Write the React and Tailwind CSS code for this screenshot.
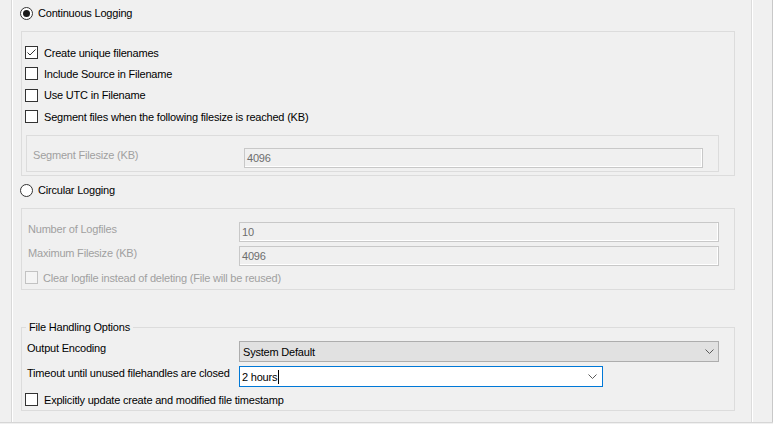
import React from "react";

const font = { fontFamily: '"Liberation Sans", Arial, sans-serif' };

function Radio({ checked }) {
  return (
    <span className="w-[13px] h-[13px] rounded-full border border-[#333333] bg-white flex items-center justify-center shrink-0">
      {checked && <span className="w-[7px] h-[7px] rounded-full bg-[#1a1a1a]" />}
    </span>
  );
}

function Check({ checked, disabled }) {
  return (
    <span
      className={
        "w-[13px] h-[13px] border shrink-0 flex items-center justify-center " +
        (disabled ? "border-[#c2c2c2] bg-[#f4f4f4]" : "border-[#333333] bg-white")
      }
    >
      {checked && (
        <svg width="11" height="11" viewBox="0 0 11 11">
          <polyline points="1.5,5.5 4,8 9.5,2.5" fill="none" stroke="#333333" strokeWidth="1" />
        </svg>
      )}
    </span>
  );
}

function Chevron() {
  return (
    <svg width="9" height="5" viewBox="0 0 9 5" className="shrink-0">
      <polyline points="0.5,0.5 4.5,4.5 8.5,0.5" fill="none" stroke="#5a5a5a" strokeWidth="1" />
    </svg>
  );
}

function CheckRow({ label, checked, h = "h-[21px]" }) {
  return (
    <div className={"flex items-center pl-[3px] " + h}>
      <Check checked={checked} />
      <span className="ml-[6px] leading-[14px] text-black">{label}</span>
    </div>
  );
}

function DisabledInput({ value, w }) {
  return (
    <div
      className={
        "h-[20px] border border-[#c8c8c8] bg-[#f0f0f0] shadow-[inset_-1px_-1px_0_#ffffff] flex items-center pl-[2px] text-[#6d6d6d] leading-[14px] " +
        w
      }
    >
      {value}
    </div>
  );
}

export default function App() {
  return (
    <div
      className="w-[773px] h-[424px] bg-[#f0f0f0] flex flex-col overflow-hidden text-[11px] tracking-[-0.2px] select-none"
      style={font}
    >
      <div className="flex flex-1 min-h-0">
        <div className="w-[11px]" />
        <div className="w-px bg-[#d9d9d9]" />
        <div className="w-px bg-white" />
        {/* content */}
        <div className="flex-1 flex flex-col">
          {/* Continuous logging */}
          <div className="mt-[4px] h-[18px] ml-[7px] flex items-center">
            <Radio checked />
            <span className="ml-[5px] leading-[14px] text-black">Continuous Logging</span>
          </div>
          <div className="mt-[9px] ml-[8px] w-[714px] h-[145px] border border-[#dcdcdc] pt-[10px] flex flex-col">
            <CheckRow label="Create unique filenames" checked />
            <CheckRow label="Include Source in Filename" />
            <CheckRow label="Use UTC in Filename" h="h-[22px]" />
            <CheckRow label="Segment files when the following filesize is reached (KB)" />
            <div className="mt-[8px] ml-[4px] w-[693px] h-[37px] border border-[#dcdcdc] pt-[12px] flex items-start">
              <div className="w-[217px] pl-[6px] leading-[14px] text-[#a0a0a0]">Segment Filesize (KB)</div>
              <DisabledInput value="4096" w="w-[459px]" />
            </div>
          </div>

          {/* Circular logging */}
          <div className="mt-[5px] h-[18px] ml-[7px] flex items-center">
            <Radio />
            <span className="ml-[5px] leading-[14px] text-black">Circular Logging</span>
          </div>
          <div className="mt-[9px] ml-[8px] w-[714px] h-[82px] border border-[#dcdcdc] pt-[13px] flex flex-col">
            <div className="flex items-start">
              <div className="w-[217px] pl-[6px] leading-[14px] text-[#a0a0a0]">Number of Logfiles</div>
              <DisabledInput value="10" w="w-[480px]" />
            </div>
            <div className="mt-[4px] flex items-start">
              <div className="w-[217px] pl-[6px] leading-[14px] text-[#a0a0a0]">Maximum Filesize (KB)</div>
              <DisabledInput value="4096" w="w-[480px]" />
            </div>
            <div className="mt-[3px] h-[17px] pl-[3px] flex items-center">
              <Check disabled />
              <span className="ml-[5px] leading-[14px] text-[#a0a0a0]">
                Clear logfile instead of deleting (File will be reused)
              </span>
            </div>
          </div>

          {/* File handling options */}
          <fieldset className="mt-[31px] ml-[8px] w-[714px] h-[90px] border border-[#dcdcdc] flex flex-col">
            <legend className="ml-[4px] px-[3px] leading-[13px] text-black">File Handling Options</legend>
            <div className="mt-[7px] flex items-start">
              <div className="w-[217px] pl-[5px] leading-[14px] text-black">Output Encoding</div>
              <div className="w-[480px] h-[21px] border border-[#adadad] bg-[#e1e1e1] flex items-center pl-[3px] pr-[4px] text-black leading-[14px]">
                <span className="flex-1">System Default</span>
                <Chevron />
              </div>
            </div>
            <div className="mt-[4px] flex items-start">
              <div className="w-[217px] pl-[5px] leading-[14px] text-black">Timeout until unused filehandles are closed</div>
              <div className="w-[364px] h-[21px] border border-[#0078d7] bg-white flex items-center pl-[2px] pr-[5px] text-black leading-[14px]">
                <span className="flex-1 flex items-center">
                  2 hours
                  <span className="w-px h-[14px] bg-black ml-[1px]" />
                </span>
                <Chevron />
              </div>
            </div>
            <div className="mt-[4px] h-[17px] pl-[3px] flex items-center">
              <Check />
              <span className="ml-[6px] leading-[14px] text-black">
                Explicitly update create and modified file timestamp
              </span>
            </div>
          </fieldset>
        </div>
        <div className="w-px bg-[#dcdcdc]" />
        <div className="w-px bg-white" />
        <div className="w-[19px]" />
        <div className="w-px bg-[#c8c8c8]" />
      </div>
      <div className="h-px bg-[#d6d6d6]" />
      <div className="h-px bg-[#f0f0f0]" />
    </div>
  );
}
